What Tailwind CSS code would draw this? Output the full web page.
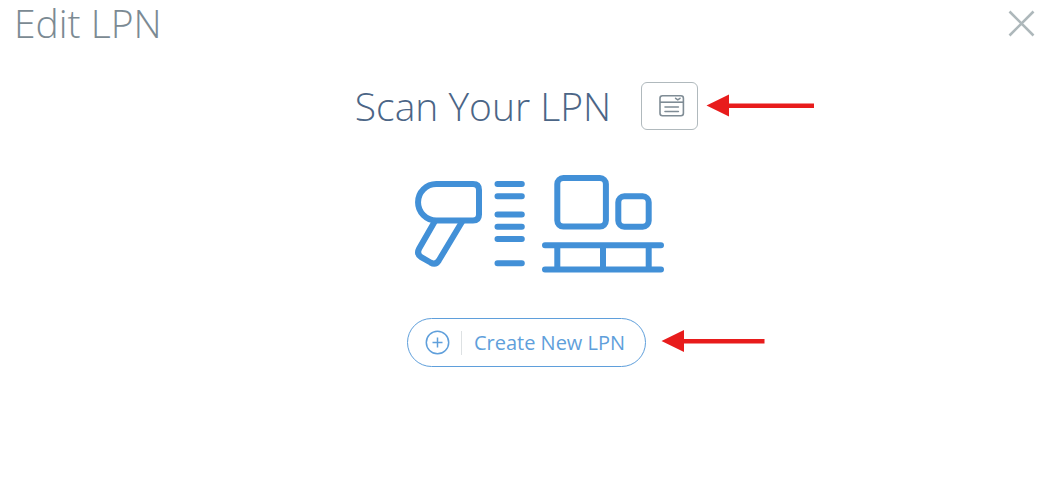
<!DOCTYPE html>
<html lang="en">
<head>
  <meta charset="UTF-8"/>
  <meta name="viewport" content="width=device-width, initial-scale=1.0"/>
  <title>Edit LPN</title>
  <script src="https://cdn.jsdelivr.net/npm/@tailwindcss/browser@4"></script>
</head>
<body class="min-h-screen bg-white font-['Open_Sans',sans-serif]">

  <!-- Header -->
  <header class="flex items-center justify-between pl-3.5 pr-[18px]">
    <h1 class="text-[39px] leading-[46px] font-light text-[#7b8a93]">Edit LPN</h1>
    <button type="button" aria-label="Close" class="cursor-pointer text-[#aeb8bb]">
      <svg class="block size-[27px]" viewBox="0 0 27 27" fill="none" stroke="currentColor" stroke-width="2.6">
        <path d="M1.5 1.5l24 24M25.5 1.5l-24 24"/>
      </svg>
    </button>
  </header>

  <!-- Scan / create -->
  <main class="flex flex-col items-center gap-11 pt-9">
    <div class="flex items-center gap-[30px]">
      <h2 class="text-[39px] leading-[48px] font-light text-[#4b6586]">Scan Your LPN</h2>
      <div class="relative">
        <button type="button" aria-label="Select LPN from list" class="flex h-12 w-[57px] cursor-pointer items-center justify-center rounded-md border border-[#b0b9bd] pl-1 text-[#7f8c95]">
          <svg class="block h-[22px] w-[26px]" viewBox="0 0 26 22" fill="none" stroke="currentColor" stroke-width="1.6">
            <rect x="1" y="0.8" width="23.4" height="20" rx="2.5"/>
            <path d="M1 7.2h23.4"/>
            <path d="M6 12h13.4M6 16.5h13.4" stroke-linecap="round"/>
            <path d="M16.6 3.3l2.2 1.5 2.2-1.5" stroke-linecap="round"/>
          </svg>
        </button>
        <svg class="absolute top-3 left-full ml-2 h-6 w-[108px]" viewBox="0 0 108 24" fill="#e81c1c" aria-hidden="true">
          <path d="M0.5 11.5L23 0.5V9.5h85v4.5H23v8.5z"/>
        </svg>
      </div>
    </div>

    <!-- Scanner, barcode and pallet -->
    <svg class="block h-[100px] w-[277px]" viewBox="-2 0 277 100" fill="none" stroke="#4290d7" stroke-width="6" aria-hidden="true">
      <path d="M46.3 10H83q6 0 6 6v24.5q0 6-6 6H46.3a18.25 18.25 0 0 1 0-36.5z"/>
      <path d="M45 47L29.2 74.5q-3 5.5 2 8.7L40.5 88.5q5.200 2.800 8.300-2L72.5 47"/>
      <path stroke-linecap="round" d="M107.5 10h24.3M107.5 22.3h24.3M107.5 40.5h24.3M107.5 52.7h24.3M107.5 65h24.3M107.5 89.3h24.3"/>
      <rect x="167.3" y="4" width="48.6" height="48.6" rx="6"/>
      <rect x="228.3" y="22.3" width="30.4" height="30.4" rx="6"/>
      <path stroke-linecap="round" d="M155 71.2h116M155 95.5h116"/>
      <path d="M167.3 71v24M213 71v24M258.7 71v24"/>
    </svg>

    <div class="relative">
      <button type="button" class="flex h-[49px] cursor-pointer items-center rounded-full border border-[#5f9fdb] pr-5 pl-[17px] text-[#5f9fdb]">
        <svg class="block size-[25px]" viewBox="0 0 25 25" fill="none" stroke="currentColor" stroke-width="1.5">
          <circle cx="12.5" cy="12.5" r="11.2"/>
          <path d="M7.5 12.5h10M12.5 7.5v10"/>
        </svg>
        <span class="ml-[11px] h-6 w-px bg-[#dde1e3]"></span>
        <span class="ml-3 text-xl leading-6">Create New LPN</span>
      </button>
      <svg class="absolute top-3 left-full ml-[15px] h-6 w-[104px]" viewBox="0 0 104 24" fill="#e81c1c" aria-hidden="true">
        <path d="M0.5 11L23 0v9h80.5v4.5H23V22z"/>
      </svg>
    </div>
  </main>

</body>
</html>
